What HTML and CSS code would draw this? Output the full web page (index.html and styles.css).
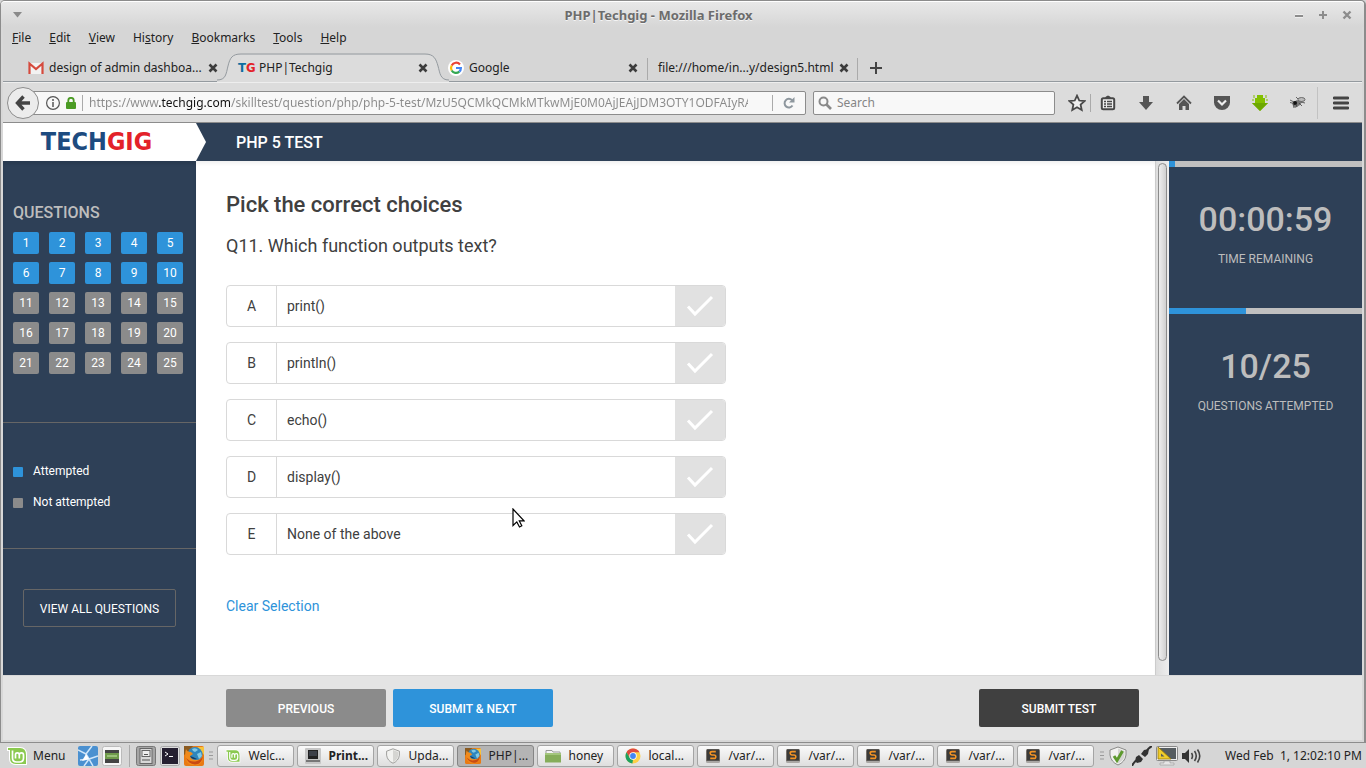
FILE: index.html
```html
<!DOCTYPE html>
<html lang="en">
<head>
<meta charset="utf-8">
<title>PHP|Techgig</title>
<link rel="stylesheet" href="styles.css">
</head>
<body>
<svg class="defs" aria-hidden="true">
  <symbol id="close" viewBox="0 0 10 10"><path d="M1.500 1.500l7 7m0-7l-7 7" stroke="#3c3c3c" stroke-width="2.600" fill="none"/></symbol>
  <symbol id="check" viewBox="0 0 50 40"><path d="M13 20.500l7 7.500 17-17" fill="none" stroke="#fff" stroke-width="3"/></symbol>
  <symbol id="mint" viewBox="0 0 22 20"><path d="M1 1h13q7 0 7 8v10H10q-7 0-7-7V5H1z" fill="#fff"/><path d="M2 2h12q6 0 6 7v9H10q-6 0-6-6V4H2z" fill="#8bc94f"/><path d="M6.500 4.500v7.500q0 4 4 4h3q4 0 4-4V9q0-2.200-2-2.200T13.300 9v3.500m0-3.500q0-2.200-2-2.200T9.500 9v3.500" fill="none" stroke="#fff" stroke-width="1.700"/></symbol>
  <symbol id="sublime" viewBox="0 0 16 16"><rect x="1" y="1" width="14" height="14" rx="1.500" fill="#77716b"/><rect x="2" y="1.500" width="12" height="11" fill="#3b3a38"/><path d="M10.800 3.600H7q-1.800 0-1.800 1.600T7 7h2q1.800 0 1.800 1.800T9 10.400H5.200" fill="none" stroke="#f39324" stroke-width="1.600"/><path d="M1 14h14" stroke="#ddd"/></symbol>
  <symbol id="firefox" viewBox="0 0 20 20"><rect width="20" height="20" rx="2" fill="#e97a13"/><path d="M0 0h9L4 6 0 9z" fill="#8a5a20"/><path d="M13 1h7v8z" fill="#f7c33a"/><circle cx="11" cy="8.500" r="7.500" fill="#2f86bd"/><path d="M8 3q4-2 6 1l-3 2-2-1zM13 8l4-2 1 4-3 3z" fill="#82c9e4"/><path d="M2 3q1 3 5 3l2 2-3 2q1 4 6 4 5 0 7-5 1 7-5 10-7 2-11-3Q0 10 2 3z" fill="#f08a1c"/><path d="M2 12q5 5 11 3 4-1 6-5-1 6-5 8-8 2-12-6z" fill="#c94a13"/><path d="M6 10q2 4 7 3l-4-2z" fill="#173d66"/></symbol>
  <symbol id="chrome" viewBox="0 0 16 16"><circle cx="8" cy="8" r="7.500" fill="#fdd049"/><path d="M1.500 4.250A7.500 7.500 0 0 1 14.500 4.250H8L4.750 9.870z" fill="#e04a3f"/><path d="M1.500 4.250L4.750 9.870 8 11.750 7.400 15.480A7.500 7.500 0 0 1 1.500 4.250z" fill="#1da260"/><circle cx="8" cy="8" r="3.700" fill="#fff"/><circle cx="8" cy="8" r="2.900" fill="#4286f5"/></symbol>
  <symbol id="shield" viewBox="0 0 20 20"><path d="M10 1l8 3v5q-1 7-8 10Q3 16 2 9V4z" fill="#f2f2f0" stroke="#8a8a88"/><path d="M10 2.500v15q6-3 6.600-8.500V5z" fill="#d5d5d2"/></symbol>
</svg>

<div class="window">
  <header class="titlebar">
    <button class="wm wm-menu" aria-label="Window menu"><svg width="10" height="6"><path d="M0 0h9L4.500 5.500z" fill="#8a8a8a"/></svg></button>
    <span class="window-title">PHP|Techgig - Mozilla Firefox</span>
    <button class="wm" aria-label="Minimize"><svg width="10" height="10"><path d="M1 6h8" stroke="#fff" stroke-width="3"/><path d="M1 6h8" stroke="#8c8c8c" stroke-width="2"/></svg></button>
    <button class="wm" aria-label="Maximize"><svg width="10" height="10"><path d="M1 5h8M5 1v8" stroke="#8c8c8c" stroke-width="2"/></svg></button>
    <button class="wm" aria-label="Close"><svg width="10" height="10"><path d="M1.500 1.500l7 7m0-7l-7 7" stroke="#8c8c8c" stroke-width="2.400"/></svg></button>
  </header>

  <nav class="menubar">
    <a href="#"><u>F</u>ile</a><a href="#"><u>E</u>dit</a><a href="#"><u>V</u>iew</a><a href="#">Hi<u>s</u>tory</a><a href="#"><u>B</u>ookmarks</a><a href="#"><u>T</u>ools</a><a href="#"><u>H</u>elp</a>
  </nav>

  <div class="tabs">
    <div class="tab">
      <svg width="16" height="16"><path d="M1 3h14v11H1z" fill="#f2f2f2"/><path d="M1.500 14V3.500L8 9l6.500-5.500V14" fill="none" stroke="#d54a3d" stroke-width="2.200"/></svg>
      <span class="tab-name">design of admin dashboa...</span>
      <button class="tab-close" aria-label="Close tab"><svg width="10" height="10"><use href="#close"/></svg></button>
    </div>
    <div class="tab tab-active">
      <svg class="tab-shape" width="232" height="30"><path d="M0 28.500C9 28.500 9 22 11 14S15 2.500 24 2.500H208C217 2.500 219 7 221 14S223 28.500 232 28.500V30H0z" fill="#dcdcdc"/><path d="M0 28C9 28 9 22 11 14S15 2 24 2H208C217 2 219 7 221 14S223 28 232 28" fill="none" stroke="#949a9f"/></svg>
      <span class="tg-icon"><b>T</b><i>G</i></span>
      <span class="tab-name">PHP|Techgig</span>
      <button class="tab-close" aria-label="Close tab"><svg width="10" height="10"><use href="#close"/></svg></button>
    </div>
    <div class="tab tab-ruled">
      <svg width="16" height="16"><circle cx="8" cy="8" r="8" fill="#fff"/><path d="M12 4.500A5 5 0 0 0 3.700 5.500" fill="none" stroke="#ea4335" stroke-width="2.200"/><path d="M3.700 5.500A5 5 0 0 0 3.700 10.500" fill="none" stroke="#fbbc05" stroke-width="2.200"/><path d="M3.700 10.500A5 5 0 0 0 11.300 11.700" fill="none" stroke="#34a853" stroke-width="2.200"/><path d="M11.300 11.700Q12.900 10.300 12.900 8H8" fill="none" stroke="#4285f4" stroke-width="2.200"/></svg>
      <span class="tab-name">Google</span>
      <button class="tab-close" aria-label="Close tab"><svg width="10" height="10"><use href="#close"/></svg></button>
    </div>
    <div class="tab tab-ruled">
      <span class="tab-name">file:///home/in...y/design5.html</span>
      <button class="tab-close" aria-label="Close tab"><svg width="10" height="10"><use href="#close"/></svg></button>
    </div>
    <button class="new-tab" aria-label="New tab"><svg width="12" height="12"><path d="M6 0v12M0 6h12" stroke="#444" stroke-width="2"/></svg></button>
  </div>

  <div class="toolbar">
    <button class="back" aria-label="Back"><svg width="16" height="16"><path d="M8.500 1.500L2.500 8l6 6.500M3 8h12" fill="none" stroke="#444" stroke-width="3.400"/></svg></button>
    <div class="urlbar">
      <svg width="14" height="14"><circle cx="7" cy="7" r="6.400" fill="none" stroke="#555" stroke-width="1.200"/><path d="M7 6v5M7 3v2" stroke="#555" stroke-width="1.500"/></svg>
      <svg width="10" height="12"><path d="M2.300 6V3.500a2.700 2.700 0 0 1 5.400 0V6" fill="none" stroke="#4b9b24" stroke-width="1.800"/><rect y="5" width="10" height="7" rx="1" fill="#4b9b24"/></svg>
      <span class="url-rule"></span>
      <input class="url" aria-label="Address" value="https://www.techgig.com/skilltest/question/php/php-5-test/MzU5QCMkQCMkMTkwMjE0M0AjJEAjJDM3OTY1ODFAIyRAIyQxNDg1">
      <span class="url-rule"></span>
      <button class="reload" aria-label="Reload"><svg width="12" height="12"><path d="M9.500 8.500A4.300 4.300 0 1 1 9 3.200" fill="none" stroke="#8e979e" stroke-width="2"/><path d="M11.500 0v5.500H6z" fill="#8e979e"/></svg></button>
    </div>
    <label class="searchbar">
      <svg width="14" height="14"><circle cx="5.500" cy="5.500" r="4" fill="none" stroke="#8a8a8a" stroke-width="2"/><path d="M8.500 8.500l4.500 4.500" stroke="#8a8a8a" stroke-width="2.600"/></svg>
      <input class="search" aria-label="Search" placeholder="Search">
    </label>
    <button class="tool tool-star" aria-label="Bookmark"><svg width="18" height="18" viewBox="0 0 16 16"><path d="M8 1.500l2 4.300 4.700.5-3.500 3.200 1 4.700L8 11.800l-4.200 2.400 1-4.700L1.300 6.300 6 5.800z" fill="#eee" stroke="#484848" stroke-width="1.600"/></svg></button>
    <button class="tool" aria-label="Bookmarks list"><svg width="16" height="16"><path d="M5 3q.5-2 3-2.500Q10.500 1 11 3z" fill="#484848"/><rect x="1.800" y="3.300" width="12.400" height="11" rx="1.500" fill="#eee" stroke="#484848" stroke-width="2"/><path d="M4 6.500h2m1 0h5M4 9h2m1 0h5M4 11.500h2m1 0h5" stroke="#484848" stroke-width="1.400"/></svg></button>
    <button class="tool" aria-label="Downloads"><svg width="16" height="16"><path d="M5 1h6v6h4l-7 8-7-8h4z" fill="#555"/></svg></button>
    <button class="tool" aria-label="Home"><svg width="16" height="16"><path d="M1 8.500l7-7 7 7" fill="none" stroke="#555" stroke-width="1.800"/><path d="M3 9l5-5 5 5v6H9.500v-4h-3v4H3z" fill="#555"/></svg></button>
    <button class="tool" aria-label="Pocket"><svg width="16" height="16"><path d="M0 1h16v6.500a8 7.500 0 0 1-16 0z" fill="#555"/><path d="M4 5.500l4 4 4-4" fill="none" stroke="#eee" stroke-width="2.200"/></svg></button>
    <button class="tool" aria-label="Download helper"><svg width="16" height="16"><path d="M5 0h6v3h2v5h3l-8 8-8-8h3V3h2z" fill="#83c000"/><path d="M2 0v3M14 0v3M1 4v2M15 4v2" stroke="#83c000"/><path d="M0 8h16l-8 8z" fill="#6da800"/></svg></button>
    <button class="tool" aria-label="Firebug"><svg width="16" height="16"><path d="M2 8l5-3 5 2-2 3-5 3z" fill="#777"/><circle cx="5" cy="8" r="2" fill="#111"/><ellipse cx="11.500" cy="4.500" rx="3.500" ry="2" fill="#bbb" stroke="#555" stroke-width=".8"/><path d="M0 5l4 2M0 7.500l4 1M3 9l1 4M6 9l1 3M9 8l3 3M11 7l4 1M8 4L6 2" stroke="#444" stroke-width=".8"/></svg></button>
    <button class="tool tool-menu" aria-label="Open menu"><svg width="16" height="14"><path d="M1 2h14M1 7h14M1 12h14" stroke="#444" stroke-width="2.800" stroke-linecap="round"/></svg></button>
  </div>

  <div class="page">
    <header class="page-head">
      <a class="logo" href="#"><span>TECH</span><em>GIG</em></a>
      <h1>PHP 5 TEST</h1>
    </header>
    <div class="page-body">
      <aside class="side">
        <section class="questions">
          <h2>QUESTIONS</h2>
          <div class="grid">
            <button class="num done">1</button><button class="num done">2</button><button class="num done">3</button><button class="num done">4</button><button class="num done">5</button>
            <button class="num done">6</button><button class="num done">7</button><button class="num done">8</button><button class="num done">9</button><button class="num done">10</button>
            <button class="num">11</button><button class="num">12</button><button class="num">13</button><button class="num">14</button><button class="num">15</button>
            <button class="num">16</button><button class="num">17</button><button class="num">18</button><button class="num">19</button><button class="num">20</button>
            <button class="num">21</button><button class="num">22</button><button class="num">23</button><button class="num">24</button><button class="num">25</button>
          </div>
        </section>
        <ul class="legend">
          <li class="key-done">Attempted</li>
          <li>Not attempted</li>
        </ul>
        <div class="view-all"><button>VIEW ALL QUESTIONS</button></div>
      </aside>

      <main class="question">
        <h2>Pick the correct choices</h2>
        <p class="prompt">Q11. Which function outputs text?</p>
        <div class="options">
          <label class="option"><span class="letter">A</span><span class="answer">print()</span><input type="checkbox"><svg class="tick"><use href="#check"/></svg></label>
          <label class="option"><span class="letter">B</span><span class="answer">println()</span><input type="checkbox"><svg class="tick"><use href="#check"/></svg></label>
          <label class="option"><span class="letter">C</span><span class="answer">echo()</span><input type="checkbox"><svg class="tick"><use href="#check"/></svg></label>
          <label class="option"><span class="letter">D</span><span class="answer">display()</span><input type="checkbox"><svg class="tick"><use href="#check"/></svg></label>
          <label class="option"><span class="letter">E</span><span class="answer">None of the above</span><input type="checkbox"><svg class="tick"><use href="#check"/></svg></label>
        </div>
        <a class="clear" href="#">Clear Selection</a>
      </main>
      <div class="scroll"><div class="thumb"></div></div>

      <aside class="stats">
        <section class="stat">
          <div class="bar"><div class="fill" style="width:3%"></div></div>
          <strong>00:00:59</strong><span>TIME REMAINING</span>
        </section>
        <section class="stat">
          <div class="bar"><div class="fill" style="width:40%"></div></div>
          <strong>10/25</strong><span>QUESTIONS ATTEMPTED</span>
        </section>
      </aside>
    </div>
    <footer class="actions">
      <button class="act">PREVIOUS</button>
      <button class="act act-next">SUBMIT &amp; NEXT</button>
      <button class="act act-submit">SUBMIT TEST</button>
    </footer>
  </div>
</div>

<footer class="taskbar">
  <button class="start"><svg width="22" height="20"><use href="#mint"/></svg>Menu</button>
  <button class="launch" aria-label="Show desktop"><svg width="20" height="20"><rect width="20" height="20" rx="2" fill="#4a90d0"/><path d="M0 4l8 4 6-8M8 8l3 5 9-3M11 13l-5 7M11 13l4 7M2 14l9-1" stroke="#cfe6fa" stroke-width="1.500" fill="none"/><path d="M8 8l3 5-7 2z" fill="#fff"/></svg></button>
  <button class="launch" aria-label="Windows"><svg width="20" height="20"><rect x=".5" y=".5" width="19" height="19" rx="2" fill="#f6f6f6" stroke="#bbb"/><rect x="3" y="4" width="14" height="13" fill="#6f9a4b"/><path d="M3 4h14v3H3zM3 13h14v4H3z" fill="#444"/><path d="M5 9h10v2H5z" fill="#9cc27a"/></svg></button>
  <span class="task-rule"></span>
  <button class="launch" aria-label="Files"><svg width="20" height="20"><rect x=".5" y=".5" width="19" height="19" rx="2" fill="#a5a5a5" stroke="#777"/><rect x="4" y="2.500" width="12" height="15" fill="#d8d8d8" stroke="#666"/><rect x="6" y="4.500" width="8" height="6" fill="#eee" stroke="#666"/><path d="M8 8.500h4M6 14h8" stroke="#555"/></svg></button>
  <button class="launch" aria-label="Terminal"><svg width="20" height="20"><rect x=".5" y=".5" width="19" height="19" rx="2" fill="#ddd" stroke="#aaa"/><rect x="2" y="2" width="16" height="16" fill="#251f30"/><path d="M5 6l3 2-3 2M9 10.500h4" fill="none" stroke="#fff"/></svg></button>
  <button class="launch" aria-label="Firefox"><svg width="20" height="20"><use href="#firefox"/></svg></button>
  <svg class="grip" width="4" height="9"><path d="M0 1h4M0 4.500h4M0 8h4" stroke="#999"/></svg>
  <div class="tasks">
    <button class="task"><svg width="16" height="16"><use href="#mint"/></svg>Welc...</button>
    <button class="task"><svg width="16" height="16"><rect width="16" height="16" rx="1" fill="#c6c6c6"/><path d="M3 2h10v9H3z" fill="#222"/><path d="M4 3h8v5H4z" fill="#3c4048"/><path d="M1 12h14v2H1z" fill="#777"/></svg><b>Print...</b></button>
    <button class="task"><svg width="16" height="16"><use href="#shield"/></svg>Upda...</button>
    <button class="task task-on"><svg width="16" height="16"><use href="#firefox"/></svg>PHP|...</button>
    <button class="task"><svg width="16" height="16"><path d="M1 2.500h6l1 1.500h7V8H1z" fill="#f4f4f4" stroke="#999"/><path d="M0 5h16v9.500H0z" fill="#86ad5a"/><path d="M0 5h16v2H0z" fill="#a3c57c"/></svg>honey</button>
    <button class="task"><svg width="16" height="16"><use href="#chrome"/></svg>local...</button>
    <button class="task"><svg width="16" height="16"><use href="#sublime"/></svg>/var/...</button>
    <button class="task"><svg width="16" height="16"><use href="#sublime"/></svg>/var/...</button>
    <button class="task"><svg width="16" height="16"><use href="#sublime"/></svg>/var/...</button>
    <button class="task"><svg width="16" height="16"><use href="#sublime"/></svg>/var/...</button>
    <button class="task"><svg width="16" height="16"><use href="#sublime"/></svg>/var/...</button>
  </div>
  <svg class="grip" width="4" height="9"><path d="M0 1h4M0 4.500h4M0 8h4" stroke="#999"/></svg>
  <div class="tray">
    <svg width="20" height="20"><use href="#shield"/><path d="M6 10l3 4.500L14.500 5" fill="none" stroke="#5e9a2e" stroke-width="3"/></svg>
    <svg width="20" height="20"><path d="M0 20q2-5 6-6M14 6q2-4 6-6" fill="none" stroke="#333" stroke-width="2"/><path d="M3 15l1-4 3-2 4 4-2 3-4 1zM9 8l3-4 5-1-1 5-3 3z" fill="#333"/></svg>
    <svg width="22" height="20"><rect x=".5" y=".5" width="21" height="14" rx="1" fill="#eee" stroke="#888"/><rect x="2" y="2" width="18" height="11" fill="#555c60"/><path d="M2 1v12h13z" fill="#f0cd2c" stroke="#9a7a00" stroke-width=".8"/><path d="M5 7.500v3h3.500z" fill="#555c60"/><path d="M8 15h6v2h4v2H4v-2h4z" fill="#e6e6e6" stroke="#999" stroke-width=".6"/></svg>
    <svg width="20" height="16"><path d="M0 5h3l4-4v14l-4-4H0z" fill="#333"/><path d="M9.500 5q2 3 0 6M12.500 3q3.500 5 0 10M15.500 1.500q4.500 6.500 0 13" fill="none" stroke="#444" stroke-width="1.600"/></svg>
  </div>
  <time class="clock">Wed Feb&nbsp; 1, 12:02:10 PM</time>
</footer>
<svg class="pointer" width="13" height="20" aria-hidden="true"><path d="M1 1v16.500l3.800-3.600 2.700 5.100 2.300-1.200-2.500-4.900H12z" fill="#fff" stroke="#000" stroke-width="1.200"/></svg>
</body>
</html>
```
FILE: styles.css
```css
* { box-sizing: border-box; }
body {
  margin: 0;
  min-height: 100vh;
  display: flex;
  flex-direction: column;
  background: #d6d6d6;
  color: #222;
  font: 12px/18px "Noto Sans", sans-serif;
}
h1, h2, p, ul { margin: 0; padding: 0; }
button { border: 0; padding: 0; background: none; color: inherit; font: inherit; }
input { border: 0; padding: 0; outline: 0; background: none; font: inherit; margin: 0; }
a { color: inherit; text-decoration: none; }
svg { display: block; flex: none; }
.defs { position: absolute; width: 0; height: 0; }

/* browser window */
.window {
  flex: 1;
  display: flex;
  flex-direction: column;
  border: 1px solid #8c8c8c;
  border-right-width: 2px;
  border-radius: 5px 5px 0 0;
  padding: 0 2px 2px;
  background: #d8d8d8;
}
.titlebar {
  height: 26px;
  margin: 0 -2px;
  padding: 0 5px;
  display: flex;
  align-items: center;
  border-top: 1px solid #fff;
  border-radius: 4px 4px 0 0;
  background: linear-gradient(#e8e8e8, #d6d6d6);
}
.wm { width: 24px; height: 24px; display: grid; place-items: center; }
.window-title { flex: 1; text-align: center; font-size: 13px; font-weight: 700; color: #6c6c6c; text-shadow: 0 1px #f4f4f4; }
.menubar { display: flex; gap: 18px; height: 25px; padding: 2px 9px; background: #d6d6d6; }
.tabs {
  height: 30px;
  padding-left: 15px;
  display: flex;
  background: #d6d6d6;
  border-bottom: 1px solid #949a9f;
}
.tab {
  position: relative;
  width: 210px;
  padding: 2px 10px 0;
  display: flex;
  align-items: center;
  gap: 5px;
}
.tab-shape { position: absolute; left: -11px; top: 0; }
.tab-name { position: relative; flex: 1; white-space: nowrap; }
.tab-close { position: relative; }
.tab-ruled { background: linear-gradient(#aaa, #aaa) right 6px / 1px 22px no-repeat; }
.tg-icon {
  position: relative;
  width: 16px;
  font: 700 13px/16px "Liberation Sans Narrow", "DejaVu Sans Condensed", sans-serif;
  color: #0d6ea0;
  display: flex;
}
.tg-icon i { font-style: normal; color: #e32229; }
.new-tab { width: 36px; padding-top: 3px; display: grid; place-items: center; }

.toolbar {
  height: 41px;
  display: flex;
  align-items: center;
  background: #dcdcdc;
  border-top: 1px solid #eee;
  border-bottom: 1px solid #8c8c8c;
}
.back {
  position: relative;
  width: 32px;
  height: 32px;
  margin: 0 -12px 0 4px;
  border: 1px solid #8c8c8c;
  border-radius: 50%;
  background: #ececec;
  display: grid;
  place-items: center;
}
.urlbar, .searchbar {
  height: 24px;
  display: flex;
  align-items: center;
  border: 1px solid #8c8c8c;
  border-radius: 2px;
  background: #f8f8f8;
}
.urlbar { flex: 1; padding-left: 18px; gap: 6px; }
.url {
  flex: 1;
  min-width: 0;
  margin-right: 18px;
  -webkit-text-fill-color: transparent;
  background: linear-gradient(90deg, #8a8a8a 70px, #111 70px 141px, #8a8a8a 141px);
  -webkit-background-clip: text;
  background-clip: text;
}
.url-rule { width: 1px; height: 16px; background: #aaa; }
.reload { width: 26px; padding-left: 4px; }
.searchbar { width: 242px; margin-left: 7px; padding: 0 4px; gap: 5px; }
.search { flex: 1; min-width: 0; }
.search::placeholder { color: #858585; }
.tool { width: 38px; height: 32px; display: grid; place-items: center; }
.tool-star { width: 28px; height: 18px; margin: 0 -2px 0 8px; border-right: 1px solid #aaa; }
.tool-menu { width: 45px; padding-left: 2px; border-left: 1px solid #c2c2c2; }

/* quiz page */
.page {
  flex: 1;
  display: flex;
  flex-direction: column;
  background: #fff;
  color: #404040;
  font-family: Roboto, sans-serif;
}
.page-head { display: flex; align-items: center; background: #2e4057; height: 38px; }
.logo {
  width: 203px;
  height: 38px;
  padding-right: 16px;
  background: #fff;
  clip-path: polygon(0 0, 193px 0, 100% 50%, 193px 100%, 0 100%);
  display: flex;
  justify-content: center;
  align-items: center;
  color: #1d4b80;
  font: 700 25px/38px "Liberation Sans Narrow", "DejaVu Sans Condensed", sans-serif;
}
.logo em { font-style: normal; color: #e32229; }
.page-head h1 { margin-left: 30px; padding-top: 1px; font-size: 16px; line-height: 20px; font-weight: 500; color: #fff; }
.page-body { flex: 1; display: flex; }

.side { width: 193px; background: #2e4057; color: #fff; box-shadow: inset 0 3px 3px #293a4f; }
.questions { height: 262px; padding: 42px 10px 0; border-bottom: 1px solid #666; }
.questions h2 { font-size: 16px; line-height: 19px; font-weight: 500; color: #bdbdbd; }
.grid { display: grid; grid-template-columns: repeat(5, 26px); gap: 8px 10px; margin-top: 10px; }
.num { height: 22px; padding-top: 1px; border-radius: 2px; background: #8b8b8b; font-size: 12px; line-height: 21px; }
.done { background: #2e93da; }
.legend { height: 126px; padding: 38px 10px 0; border-bottom: 1px solid #666; list-style: none; display: grid; gap: 11px; align-content: start; }
.legend li { display: flex; align-items: center; gap: 10px; height: 20px; font-size: 12px; }
.legend li::before { content: ""; width: 10px; height: 10px; margin-top: 1px; border-radius: 1px; background: #8b8b8b; }
.legend .key-done::before { background: #2e93da; }
.view-all { padding: 40px 20px 0; }
.view-all button { width: 100%; height: 38px; padding-top: 1px; border: 1px solid #666; border-radius: 2px; font-size: 12px; }

.question { flex: 1; padding: 29px 30px 0; box-shadow: inset 0 4px 4px -2px #eee; }
.question h2 { font-size: 22px; line-height: 30px; font-weight: 500; }
.prompt { margin-top: 12px; font-size: 18px; line-height: 28px; }
.options { max-width: 500px; margin-top: 25px; display: grid; gap: 15px; }
.option {
  display: grid;
  grid-template-columns: 50px 1fr 50px;
  height: 42px;
  border: 1px solid #d9d9d9;
  border-radius: 4px;
  overflow: hidden;
  font-size: 14px;
  line-height: 40px;
}
.letter { border-right: 1px solid #d9d9d9; text-align: center; }
.answer { padding-left: 10px; }
.option input { grid-area: 1 / 3; appearance: none; background: #e1e1e1; }
.tick { grid-area: 1 / 3; width: 50px; height: 40px; pointer-events: none; }
.clear { display: inline-block; margin-top: 40px; color: #2e93da; font-size: 14px; line-height: 22px; }

.scroll { width: 14px; padding: 2px 2px 14px; display: flex; border-left: 1px solid #ccc; background: linear-gradient(90deg, #ddd, #eee); }
.thumb { flex: 1; border: 1px solid #8c8c8c; border-radius: 5px; background: linear-gradient(90deg, #eee, #d0d0d0); }

.stats { width: 193px; background: #2e4057; color: #bdbdbd; }
.stat { height: 147px; display: flex; flex-direction: column; align-items: center; }
.bar { width: 100%; height: 6px; background: #c0c0c0; }
.fill { height: 100%; background: #2e93da; }
.stat strong { margin-top: 32px; font-size: 34px; line-height: 40px; font-weight: 500; }
.stat span { margin-top: 11px; font-size: 12px; }

.actions { height: 65px; padding: 13px 223px; display: flex; gap: 7px; border-top: 1px solid #d8d8d8; background: #e4e4e4; }
.act { width: 160px; height: 38px; padding-top: 1px; border-radius: 2px; background: #8b8b8b; color: #fff; font-size: 12px; font-weight: 500; }
.act-next { background: #2e93da; }
.act-submit { background: #404040; margin-left: auto; }

/* desktop panel */
.taskbar { height: 25px; padding: 0 4px 0 6px; display: flex; align-items: center; }
.start { display: flex; align-items: center; gap: 5px; margin-right: 13px; }
.launch { margin-right: 4px; }
.task-rule { width: 1px; height: 22px; margin: 0 6px 0 3px; background: #aaa; }
.grip { margin: 0 4px 0 1px; }
.tasks { flex: 1; display: flex; gap: 3px; }
.task {
  flex: 1;
  max-width: 77px;
  height: 22px;
  display: flex;
  align-items: center;
  gap: 7px;
  padding-left: 7px;
  border: 1px solid #a4a4a4;
  border-radius: 3px;
  background: linear-gradient(#fafafa, #dedede);
  white-space: nowrap;
}
.task-on { background: #b4b4b4; border-color: #858585; }
.tray { display: flex; align-items: center; gap: 4px; }
.clock { margin-left: 23px; }

.pointer { position: absolute; left: 512px; top: 508px; }
```
